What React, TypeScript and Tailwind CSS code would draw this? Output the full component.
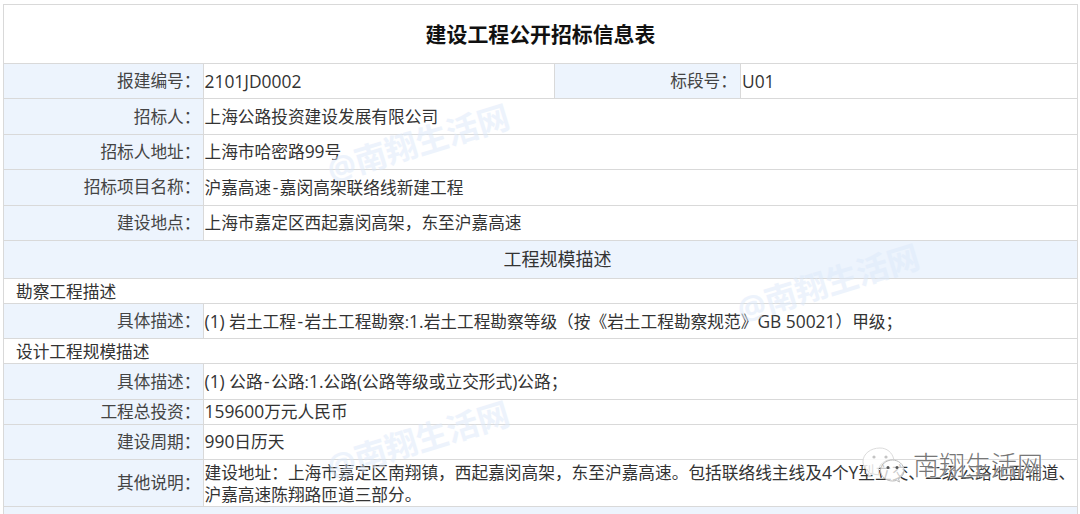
import type { ReactNode } from "react";

// ── Table rows ────────────────────────────────────────────────────────────────

const FONT = "font-['Open_Sans','Noto_Sans_CJK_SC',sans-serif]";

// latin runs are a touch wider in the source table than Open Sans at 16.7px
function Lat({ children }: { children: ReactNode }) {
  return <span className="text-[17.400px]">{children}</span>;
}

function Dash() {
  return <span className="px-[1.500px] text-[17.400px]">-</span>;
}

function Label({
  children,
  pad = "pr-[2px]",
}: {
  children: ReactNode;
  pad?: string;
}) {
  return (
    <td className={`border border-[#d9d9d9] bg-[#edf4fd] text-right text-[#444] ${pad}`}>
      {children}
    </td>
  );
}

function Value({ children, span = 3 }: { children: ReactNode; span?: number }) {
  return (
    <td
      colSpan={span}
      className="border border-[#d9d9d9] bg-transparent pl-[1px] text-[#333]"
    >
      {children}
    </td>
  );
}

function Row({
  label,
  value,
  h = "h-[35.400px]",
}: {
  label: string;
  value: ReactNode;
  h?: string;
}) {
  return (
    <tr className={h}>
      <Label>{label}</Label>
      <Value>{value}</Value>
    </tr>
  );
}

function SubHead({ children }: { children: ReactNode }) {
  return (
    <tr className="h-[25px]">
      <td colSpan={4} className="border border-[#d9d9d9] pl-[12px] pt-[2px] text-[#333]">
        {children}
      </td>
    </tr>
  );
}

// ── Watermarks ────────────────────────────────────────────────────────────────

function Watermark({ className }: { className: string }) {
  return (
    <span
      className={`pointer-events-none absolute -translate-x-1/2 -translate-y-1/2 -rotate-[17deg] whitespace-nowrap text-[32px] font-bold leading-none text-[#dce9fa] opacity-50 ${className}`}
    >
      @南翔生活网
    </span>
  );
}

function WechatMark() {
  return (
    <svg viewBox="0 0 43 36" className="h-[36px] w-[43px]" fill="none">
      <path
        d="M18 1C8.500 1 1 7 1 14.500c0 4.300 2.400 8 6.200 10.500L6 29.500l5-2.600c2 .6 4 .9 6 .9-.4-1.300-.6-2.300-.6-3.500 0-6.700 6.400-11.800 14-11.800h1.400C30.500 5.500 24.800 1 18 1z"
        fill="#fff"
        fillOpacity="0.85"
        stroke="#dcdcdc"
      />
      <path
        d="M42 23.500c0-6-5.700-10.500-11.500-10.500-6.300 0-12 4.500-12 10.500S24.200 34 30.500 34c1.300 0 2.700-.2 4-.6l3 1.600-1-3.200c3.700-2 5.500-4.800 5.500-8.300z"
        fill="#fff"
        fillOpacity="0.75"
        stroke="#bdbdbd"
      />
      <circle cx="12" cy="10" r="1.600" fill="#c4c4c4" />
      <circle cx="24" cy="10" r="1.600" fill="#c4c4c4" />
      <circle cx="26" cy="20.500" r="1.500" fill="#555" />
      <circle cx="35" cy="20.500" r="1.500" fill="#555" />
    </svg>
  );
}

// ── Page ──────────────────────────────────────────────────────────────────────

export default function App() {
  return (
    <div
      className={`relative h-[514px] w-[1080px] overflow-hidden bg-white pl-[3px] pr-[2px] pt-[4px] text-[16.700px] leading-[20px] ${FONT}`}
    >
      <table className="w-full table-fixed border-collapse">
        <colgroup>
          <col className="w-[199.500px]" />
          <col className="w-[351.500px]" />
          <col className="w-[186px]" />
          <col />
        </colgroup>
        <tbody>
          <tr className="h-[59px]">
            <td
              colSpan={4}
              className="border border-[#d9d9d9] text-center text-[20.900px] font-bold text-[#111]"
            >
              建设工程公开招标信息表
            </td>
          </tr>
          <tr className="h-[35.400px]">
            <Label>报建编号：</Label>
            <Value span={1}>
              <Lat>2101JD0002</Lat>
            </Value>
            <Label pad="pr-[3px]">标段号：</Label>
            <Value span={1}>
              <Lat>U01</Lat>
            </Value>
          </tr>
          <Row label="招标人：" value="上海公路投资建设发展有限公司" />
          <Row
            label="招标人地址："
            value={
              <>
                上海市哈密路<Lat>99</Lat>号
              </>
            }
          />
          <Row
            label="招标项目名称："
            value={
              <>
                沪嘉高速
                <Dash />
                嘉闵高架联络线新建工程
              </>
            }
          />
          <Row label="建设地点：" value="上海市嘉定区西起嘉闵高架，东至沪嘉高速" />
          <tr className="h-[38px]">
            <td
              colSpan={4}
              className="border border-[#d9d9d9] bg-[#edf4fd] pl-[34px] text-center text-[18px] text-[#333]"
            >
              工程规模描述
            </td>
          </tr>
          <SubHead>勘察工程描述</SubHead>
          <Row
            label="具体描述："
            value={
              <>
                <Lat>(1) </Lat>岩土工程
                <Dash />
                岩土工程勘察:<Lat>1.</Lat>岩土工程勘察等级（按《岩土工程勘察规范》
                <Lat>GB 50021</Lat>）甲级；
              </>
            }
          />
          <SubHead>设计工程规模描述</SubHead>
          <Row
            label="具体描述："
            value={
              <>
                <Lat>(1) </Lat>公路
                <Dash />
                公路:<Lat>1.</Lat>公路<Lat>(</Lat>公路等级或立交形式<Lat>)</Lat>公路；
              </>
            }
          />
          <Row
            label="工程总投资："
            value={
              <>
                <Lat>159600</Lat>万元人民币
              </>
            }
            h="h-[25px]"
          />
          <Row
            label="建设周期："
            value={
              <>
                <Lat>990</Lat>日历天
              </>
            }
          />
          <Row
            h="h-[47px]"
            label="其他说明："
            value={
              <span className="block leading-[22px]">
                建设地址：上海市嘉定区南翔镇，西起嘉闵高架，东至沪嘉高速。包括联络线主线及<Lat>4</Lat>个<Lat>Y</Lat>型立交、二级公路地面辅道、
                <br />
                沪嘉高速陈翔路匝道三部分。
              </span>
            }
          />
          <tr className="h-[12px]">
            <td colSpan={4} className="border border-[#d9d9d9] bg-[#edf4fd]" />
          </tr>
        </tbody>
      </table>

      <Watermark className="left-[418px] top-[143px]" />
      <Watermark className="left-[828px] top-[283px]" />
      <Watermark className="left-[418px] top-[440px]" />

      <div className="pointer-events-none absolute left-[862px] top-[447px] flex items-center gap-[8px]">
        <WechatMark />
        <span className="text-[26px] font-light leading-none text-[#777] [text-shadow:0_0_2px_#fff,0_0_2px_#fff]">
          南翔生活网
        </span>
      </div>
    </div>
  );
}
